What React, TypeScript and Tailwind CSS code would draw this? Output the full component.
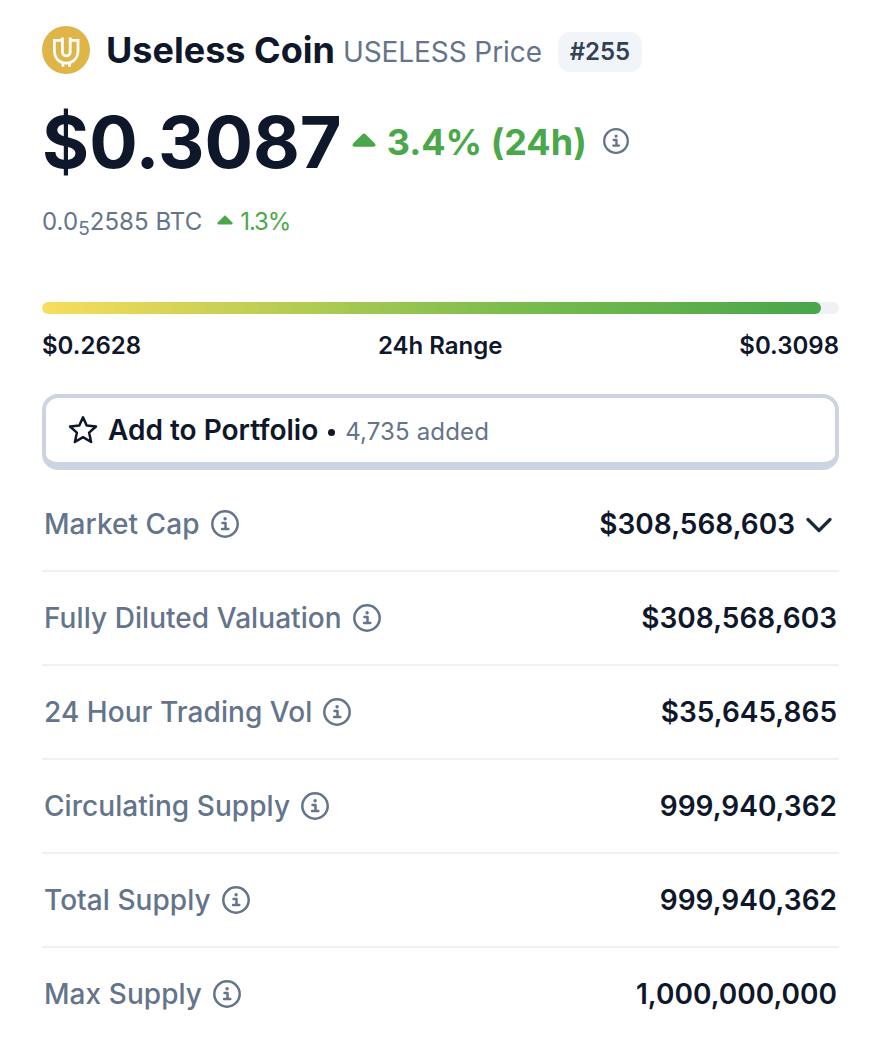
import type { ReactNode } from "react"

const stats = [
  { label: "Market Cap", value: "$308,568,603", expandable: true },
  { label: "Fully Diluted Valuation", value: "$308,568,603" },
  { label: "24 Hour Trading Vol", value: "$35,645,865" },
  { label: "Circulating Supply", value: "999,940,362" },
  { label: "Total Supply", value: "999,940,362" },
  { label: "Max Supply", value: "1,000,000,000" },
]

function CoinLogo() {
  return (
    <svg viewBox="0 0 48 48" className="h-12 w-12 shrink-0" fill="none" stroke="#fff" strokeWidth="2.8">
      <circle cx="24" cy="24" r="24" fill="#e0b548" stroke="none" />
      <path d="M20.3 14.3H12.4V24C12.4 32 17 36.8 24 37.2C31.2 36.8 36 32 36 24V14.3H28.2" />
      <path d="M20.4 11.5V26.2C20.4 31 28.2 31 28.2 26.2V11.5" />
      <path d="M20.9 36.5V40.7M27.5 36.5V40.7" />
    </svg>
  )
}

function InfoIcon({ className }: { className: string }) {
  return (
    <svg viewBox="0 0 28 28" className={className} fill="none" stroke="#64748b">
      <circle cx="14" cy="14" r="12.7" strokeWidth="2.5" />
      <path d="M11.5 12.9H14.5V18.6M11.1 18.9H17.3" strokeWidth="2.5" strokeLinecap="round" strokeLinejoin="round" />
      <circle cx="14.1" cy="8.7" r="1.7" fill="#64748b" stroke="none" />
    </svg>
  )
}

function UpCaret({ className }: { className: string }) {
  return (
    <svg viewBox="0 0 24 14" className={className} fill="#4ba84a">
      <path d="M10.7 1 1.3 10.2C-.2 11.8.5 13.7 2.5 13.7H21.5C23.5 13.7 24.2 11.8 22.7 10.2L13.3 1C12.5.2 11.5.2 10.7 1Z" />
    </svg>
  )
}

function StatRow({ label, value, last, children }: { label: string; value: string; last: boolean; children?: ReactNode }) {
  return (
    <div className={`flex h-[94px] items-center justify-between border-b-2 px-0.5 ${last ? "border-transparent" : "border-[#eff0f3]"}`}>
      <div className="flex items-center gap-[11px]">
        <span className="text-[28px] font-medium tracking-[0.06px] text-[#64748b]">{label}</span>
        <InfoIcon className="h-7 w-7" />
      </div>
      <div className="flex items-center">
        <span className="text-[28px] font-semibold">{value}</span>
        {children}
      </div>
    </div>
  )
}

export default function App() {
  return (
    <main className="h-[1040px] w-[886px] overflow-hidden bg-white pt-[26px] pr-[47px] pl-[42px] font-['Inter',sans-serif] whitespace-nowrap text-[#0f172a]">
      <div className="flex h-12 items-center">
        <CoinLogo />
        <h1 className="ml-4 text-[36px] font-bold">Useless Coin</h1>
        <span className="mt-1 ml-2 text-[28px] tracking-[-0.08px] text-[#64748b]">USELESS Price</span>
        <span className="mt-1 ml-4 flex h-10 w-[84px] items-center justify-center rounded-xl bg-[#f1f5f9] text-2xl font-semibold text-[#334155]">
          #255
        </span>
      </div>

      <div className="mt-6 flex h-[88px] items-center">
        <span className="text-[72px] font-bold">$0.3087</span>
        <UpCaret className="mb-1 ml-2.5 h-[14px] w-6" />
        <span className="ml-[11px] text-[36px] font-bold text-[#4ba84a]">3.4% (24h)</span>
        <InfoIcon className="mb-0.5 ml-4 h-[26px] w-[26px]" />
      </div>

      <div className="mt-4 flex h-10 items-center text-2xl text-[#64748b]">
        <span className="tracking-[0.05px]">
          0.0<sub className="text-[19px]">5</sub>2585 BTC
        </span>
        <UpCaret className="mb-1 ml-[15px] h-[10px] w-4" />
        <span className="ml-[7px] tracking-[-1.1px] text-[#4ba84a]">1.3%</span>
      </div>

      <div className="mt-[60px] h-3 overflow-hidden rounded-full bg-[#eff1f5]">
        <div className="h-3 w-[779px] rounded-full bg-linear-[90deg,#fadd5b,#7abd4d_60%,#4aa54b]" />
      </div>
      <div className="mt-4 flex h-8 items-center justify-between text-2xl font-semibold">
        <span>$0.2628</span>
        <span>24h Range</span>
        <span>$0.3098</span>
      </div>

      <button className="mt-8 flex h-[76px] w-full items-center rounded-2xl border-4 border-b-8 border-[#cbd5e1] pl-[22px]">
        <svg viewBox="0 0 30 30" className="h-[30px] w-[30px]" fill="none" stroke="#0f172a" strokeWidth="2.5" strokeLinejoin="round">
          <path d="M15 2.3 18.7 10.5 28 11.5 21.1 17.6 23.1 27 15 22.2 6.9 27 8.9 17.6 2 11.5 11.3 10.5Z" />
        </svg>
        <span className="ml-2.5 text-[28px] font-semibold">Add to Portfolio</span>
        <span className="mt-1 ml-2.5 h-[7px] w-[7px] rounded-full bg-[#0f172a]" />
        <span className="mt-[3px] ml-2.5 text-2xl tracking-[0.15px] text-[#64748b]">4,735 added</span>
      </button>

      <div className="mt-2">
        {stats.map((stat, index) => (
          <StatRow key={stat.label} label={stat.label} value={stat.value} last={index === stats.length - 1}>
            {stat.expandable && (
              <svg viewBox="0 0 26 16" className="mt-0.5 mr-[5px] ml-[11px] h-4 w-[26px]" fill="none" stroke="#1e293b" strokeWidth="3.2" strokeLinecap="round" strokeLinejoin="round">
                <path d="M2 2.5 13 13.5 24 2.5" />
              </svg>
            )}
          </StatRow>
        ))}
      </div>
    </main>
  )
}
